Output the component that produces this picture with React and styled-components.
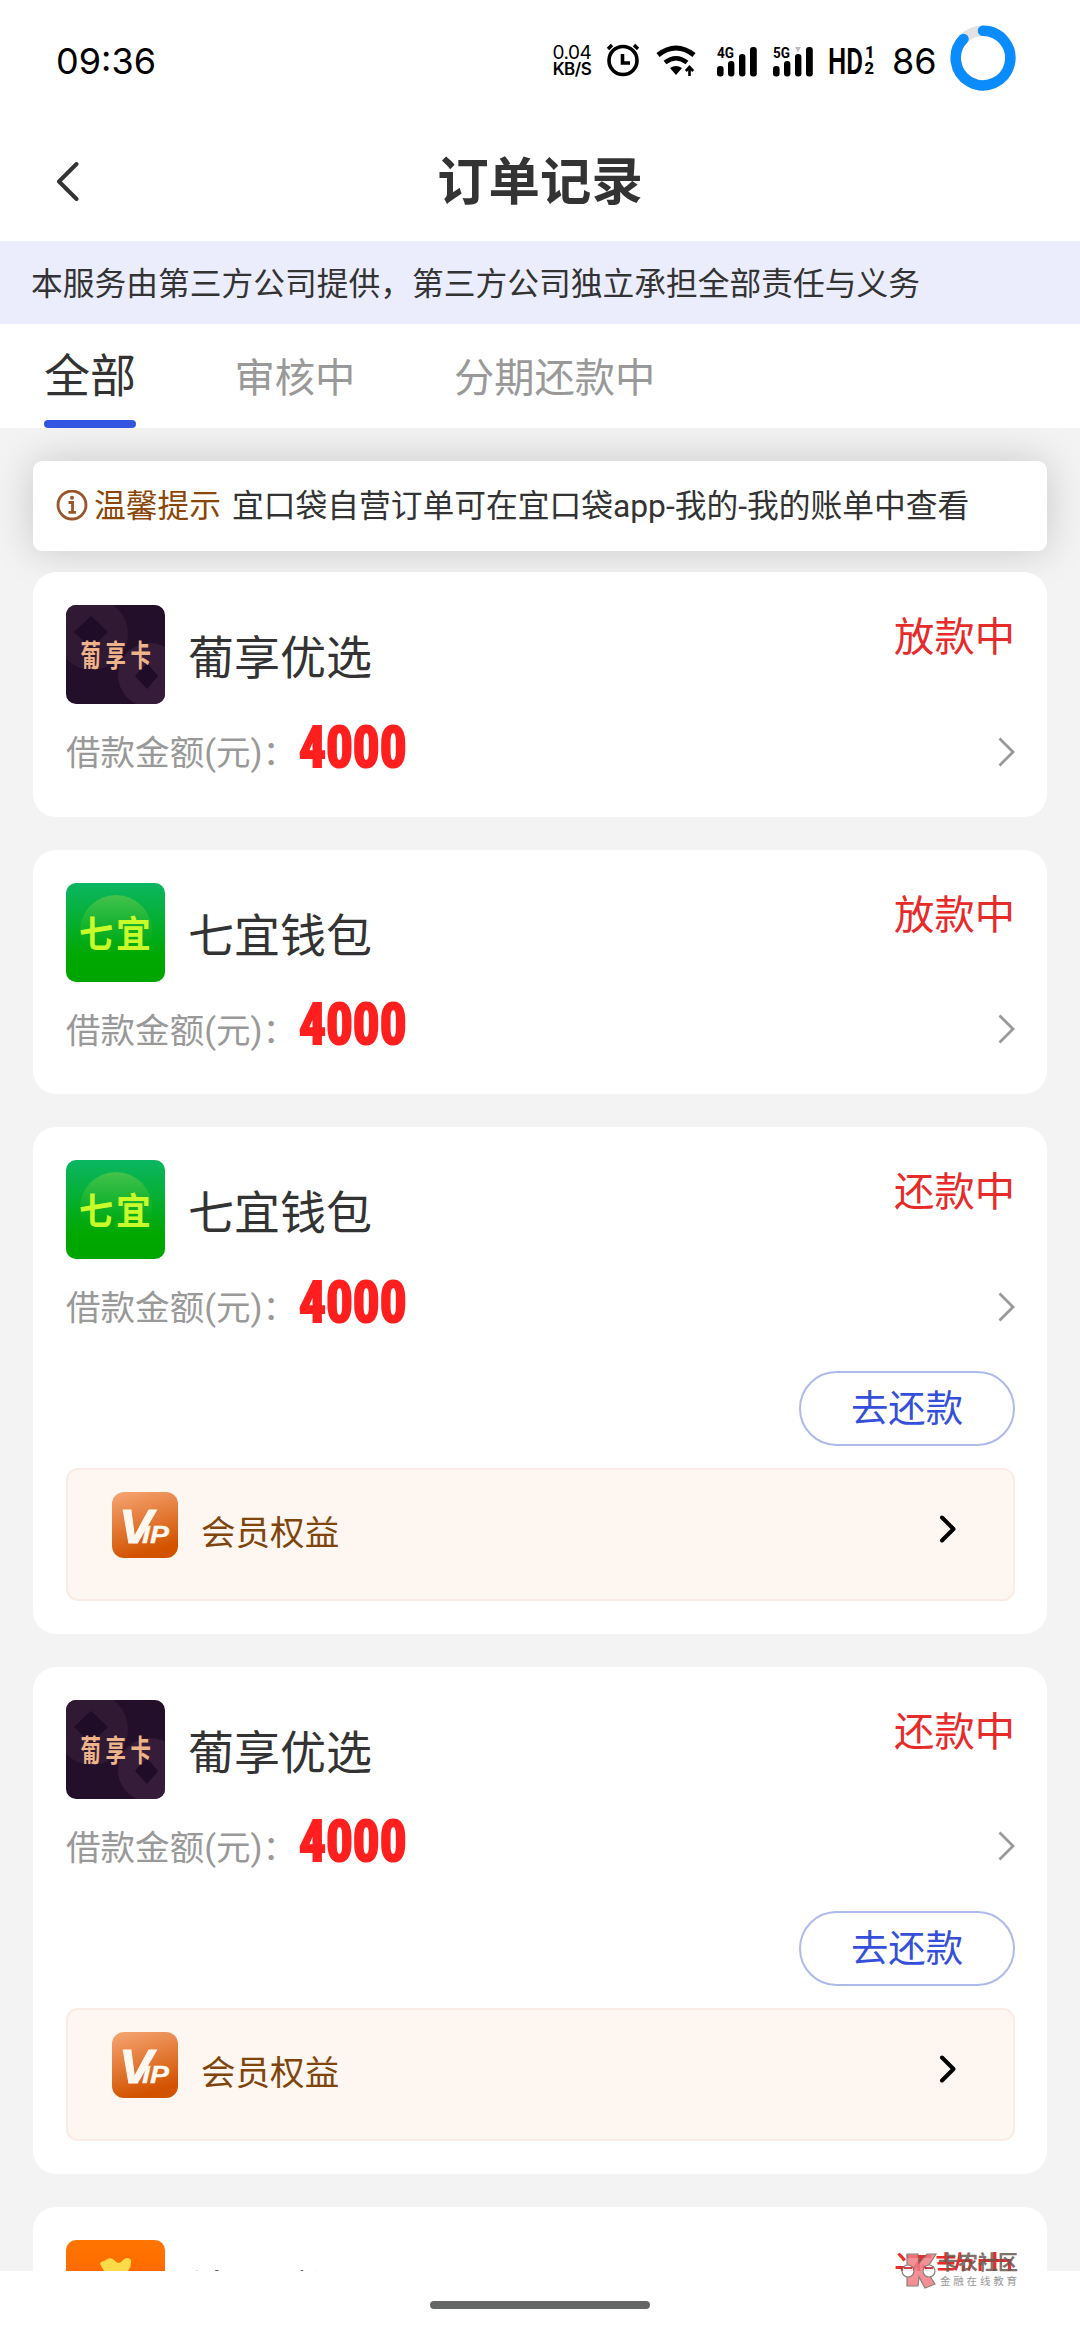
import React from "react";
import styled, { createGlobalStyle } from "styled-components";

const GlobalStyle = createGlobalStyle`
  * {
    box-sizing: border-box;
  }
  body {
    margin: 0;
    background: #fff;
    font-family: Roboto, "Noto Sans CJK SC", sans-serif;
    color: #333;
  }
  svg {
    display: block;
    flex: none;
  }
`;

const Screen = styled.div`
  position: relative;
  width: 1080px;
  height: 2340px;
  overflow: hidden;
  display: flex;
  flex-direction: column;
  background: #fff;
`;

const StatusBar = styled.div`
  height: 121px;
  flex: none;
  padding: 0 64px 0 56px;
  display: flex;
  justify-content: space-between;
  align-items: center;
  font-family: Inter, sans-serif;
  font-size: 36px;
  color: #000;
`;

const StatusIcons = styled.div`
  display: flex;
  align-items: center;
  .alarm {
    margin: -3px 16px 0 0;
  }
  .wifi {
    margin-right: 21px;
  }
  .signal {
    margin-right: 15px;
  }
  .hd {
    margin-right: 17px;
  }
  .ring {
    margin-top: -6px;
  }
`;

const NetSpeed = styled.div`
  width: 42px;
  margin-right: 13px;
  font-size: 19px;
  line-height: 16px;
  letter-spacing: -0.5px;
  text-align: center;
  b {
    display: block;
    font-size: 17px;
    font-weight: 600;
  }
`;

const Battery = styled.span`
  width: 42px;
  margin-right: 16px;
  white-space: nowrap;
`;

const Header = styled.div`
  height: 120px;
  flex: none;
  padding: 0 56px;
  display: grid;
  grid-template-columns: 24px 1fr 24px;
  align-items: center;
`;

const Title = styled.h1`
  margin: 0;
  padding-top: 3px;
  text-align: center;
  font-size: 51.4px;
  line-height: 72px;
  font-weight: 700;
`;

const Notice = styled.div`
  height: 83px;
  flex: none;
  padding-left: 31px;
  background: #ebedfd;
  font-size: 31.75px;
  line-height: 87px;
  white-space: nowrap;
`;

const Tabs = styled.div`
  height: 104px;
  flex: none;
  padding-left: 44px;
  display: flex;
  gap: 98.5px;
  position: relative;
  z-index: 1;
  background: #fff;
`;

const Tab = styled.div`
  height: 104px;
  line-height: ${props => (props.$active ? "105px" : "110px")};
  font-size: ${props => (props.$active ? "46px" : "40.3px")};
  color: ${props => (props.$active ? "#333" : "#999")};
  display: flex;
  flex-direction: column;
  &::after {
    content: "";
    display: ${props => (props.$active ? "block" : "none")};
    height: 8px;
    margin-top: -9px;
    border-radius: 4px;
    background: #3455df;
  }
`;

const Content = styled.div`
  height: 1843px;
  flex: none;
  overflow: hidden;
  padding: 33px 33px 0;
  background: #f3f3f3;
`;

const Tip = styled.div`
  height: 90px;
  padding-left: 23px;
  margin-bottom: 21px;
  display: flex;
  align-items: center;
  border-radius: 9px;
  background: #fff;
  box-shadow: 0 0 42px rgba(0, 0, 0, 0.18);
  font-size: 31.75px;
  white-space: nowrap;
  svg {
    margin-right: 6px;
  }
  span {
    margin-top: -7px;
  }
`;

const TipLabel = styled.span`
  color: #8a4708;
  margin-right: 11px;
`;

const Card = styled.div`
  height: ${props => (props.$repay ? "506.7px" : "244.6px")};
  margin-bottom: 33px;
  padding: 33px 32px 0 33px;
  border-radius: 23px;
  background: #fff;
`;

const CardTop = styled.div`
  display: flex;
  height: 99px;
`;

const Name = styled.div`
  flex: 1;
  margin-left: 23px;
  font-size: 46px;
  line-height: 106px;
`;

const Status = styled.div`
  font-size: 40.3px;
  line-height: 66px;
  color: #e72a2a;
`;

const AmountRow = styled.div`
  height: 98px;
  padding-bottom: 3px;
  display: flex;
  align-items: center;
`;

const AmountLabel = styled.span`
  font-size: 34.56px;
  line-height: 40px;
  margin-top: 3px;
  color: #999;
  width: 233px;
  white-space: nowrap;
`;

const Amount = styled.span`
  flex: 1;
  font-family: "Liberation Sans Narrow", "Roboto Condensed", Roboto, sans-serif;
  font-size: 57px;
  font-weight: 700;
  line-height: 60px;
  margin-top: -8px;
  color: #ff1f1f;
  -webkit-text-stroke: 2.2px #ff1f1f;
  transform: scaleX(0.935);
  transform-origin: 0 50%;
`;

const ActionRow = styled.div`
  display: flex;
  justify-content: flex-end;
  margin: 14px 0 22px;
`;

const RepayButton = styled.button`
  width: 216px;
  height: 75px;
  padding: 0;
  border: 2px solid #aeb9ec;
  border-radius: 38px;
  background: #fff;
  color: #3450d8;
  font-family: inherit;
  font-size: 37.4px;
  line-height: 72px;
`;

const VipBox = styled.div`
  height: 133px;
  padding: 22px 57px 0 44px;
  display: flex;
  align-items: flex-start;
  justify-content: space-between;
  border: 2px solid #faebe4;
  border-radius: 12px;
  background: #fef7f1;
  > svg {
    margin-top: 23px;
  }
`;

const VipLabel = styled.div`
  display: flex;
  align-items: center;
  gap: 23px;
  font-size: 34.56px;
  color: #80450c;
  span {
    padding-top: 10px;
  }
`;

const HomeBar = styled.div`
  flex: 1;
  padding-top: 30px;
  background: #fff;
  &::after {
    content: "";
    display: block;
    width: 220px;
    height: 8px;
    margin: 0 auto;
    border-radius: 4px;
    background: #656766;
  }
`;

const Watermark = styled.div`
  position: absolute;
  left: 901px;
  top: 2250px;
  z-index: 2;
  display: flex;
  opacity: 0.85;
`;

const WatermarkText = styled.div`
  margin-left: 1px;
  font-size: 20px;
  line-height: 26px;
  font-weight: 700;
  color: #6a5a50;
  white-space: nowrap;
  small {
    display: block;
    padding-left: 2px;
    font-size: 10.5px;
    line-height: 12px;
    font-weight: 400;
    letter-spacing: 2.8px;
    color: #888;
  }
`;

const CJK = "Noto Sans CJK SC, sans-serif";

const AlarmIcon = () => (
  <svg className="alarm" width="34" height="36" viewBox="0 0 34 36" fill="none" stroke="#000">
    <circle cx="17" cy="19.5" r="14" strokeWidth="3.6" />
    <path d="M16.5 13v9h7.5" strokeWidth="3.6" />
    <path d="M2 8l4-4M32 8l-4-4" strokeWidth="3.4" />
  </svg>
);

const WifiIcon = () => (
  <svg className="wifi" width="40" height="34" viewBox="0 0 40 34" fill="none" stroke="#000">
    <path d="M2 11Q20 -3 38 11" strokeWidth="5" />
    <path d="M9 18.5Q20 10 31 18.5" strokeWidth="4.6" />
    <path d="M14 24Q20 20 26 24L20 31Z" fill="#000" stroke="none" />
    <path d="M33.5 32v-8M29.8 27l3.7-4 3.7 4" strokeWidth="2.6" />
  </svg>
);

const SignalIcon = ({ label, dot }) => (
  <svg className="signal" width="41" height="32" viewBox="0 0 41 32">
    <text x="0" y="12.5" fontFamily="Roboto" fontWeight="700" fontSize="15.5" textLength="17" lengthAdjust="spacingAndGlyphs">{label}</text>
    <rect x="0" y="21" width="6.6" height="10.5" rx="3" />
    <rect x="11" y="16" width="6.4" height="15.5" rx="3" />
    <rect x="22" y="9" width="6.4" height="22.5" rx="3" />
    <rect x="33" y="2" width="6.8" height="29.5" rx="3" />
    {dot && <path d="M22 2h6l-3 5z" fill="#bbb" />}
  </svg>
);

const HdIcon = () => (
  <svg className="hd" width="46" height="32" viewBox="0 0 46 32">
    <text x="-1" y="28.5" fontFamily="Roboto" fontWeight="600" fontSize="36" textLength="35" lengthAdjust="spacingAndGlyphs">HD</text>
    <text x="36" y="13" fontFamily="Roboto" fontWeight="800" fontSize="16.5">1</text>
    <text x="35.5" y="28.5" fontFamily="Roboto" fontWeight="800" fontSize="16.5">2</text>
  </svg>
);

const BatteryRing = () => (
  <svg className="ring" width="66" height="66" viewBox="0 0 66 66" fill="none" strokeWidth="10.5">
    <circle cx="33" cy="33" r="27.3" stroke="#e2e2e4" />
    <path d="M33 5.7A27.3 27.3 0 1 1 13.5 13.9" stroke="#0a8cff" strokeLinecap="round" />
  </svg>
);

const BackIcon = () => (
  <svg width="24" height="40" viewBox="0 0 24 40" fill="none" stroke="#333" strokeWidth="4" strokeLinecap="round" strokeLinejoin="round">
    <path d="M20.5 3L3 20.5L20.5 38" />
  </svg>
);

const InfoIcon = () => (
  <svg width="32" height="32" viewBox="0 0 32 32" fill="none" stroke="#9a5528">
    <circle cx="16" cy="15" r="14" strokeWidth="2.8" />
    <path d="M12.5 12.5h4v9.5M12.5 22.3h7.5" strokeWidth="2.8" />
    <circle cx="16" cy="7.8" r="2" fill="#9a5528" stroke="none" />
  </svg>
);

const Arrow = () => (
  <svg width="18" height="32" viewBox="0 0 18 32" fill="none" stroke="#999" strokeWidth="2.8">
    <path d="M2.5 2.5L16 16L2.5 29.5" />
  </svg>
);

const VipArrow = () => (
  <svg width="18" height="28" viewBox="0 0 18 28" fill="none" stroke="#000" strokeWidth="4" strokeLinecap="round" strokeLinejoin="round">
    <path d="M4 2.5L15.5 14L4 25.5" />
  </svg>
);

const VipIcon = () => (
  <svg width="66" height="66" viewBox="0 0 66 66">
    <defs>
      <linearGradient id="vip" x1="0" y1="0" x2="0.3" y2="1">
        <stop offset="0" stopColor="#f6a674" />
        <stop offset="1" stopColor="#d25200" />
      </linearGradient>
    </defs>
    <rect width="66" height="66" rx="12" fill="url(#vip)" />
    <g fill="#fff8f0" stroke="#fff8f0" fontFamily="Liberation Sans" fontWeight="700" fontStyle="italic">
      <text x="7" y="51" fontSize="49" strokeWidth="1" textLength="34" lengthAdjust="spacingAndGlyphs">V</text>
      <text x="30" y="51" fontSize="24" strokeWidth="0.3" textLength="27" lengthAdjust="spacingAndGlyphs">IP</text>
    </g>
  </svg>
);

const PuxiangLogo = () => (
  <svg width="99" height="99" viewBox="0 0 99 99">
    <defs>
      <clipPath id="round">
        <rect width="99" height="99" rx="10" />
      </clipPath>
    </defs>
    <g clipPath="url(#round)">
      <rect width="99" height="99" fill="#230f29" />
      <circle cx="26" cy="29" r="36" fill="#2f1933" />
      <path d="M25 11L42 27L25 43L8 27Z" fill="#1f0c27" />
      <circle cx="84" cy="70" r="32" fill="#351c38" />
      <path d="M81 58L92 71L81 84L69 71Z" fill="#1f0c27" />
    </g>
    <g fill="#edb48c" fontFamily={CJK} fontWeight="700" fontSize="30">
      <text transform="translate(14.5 60.5) scale(.68 1)">葡</text>
      <text transform="translate(39.5 60.5) scale(.68 1)">享</text>
      <text transform="translate(64.5 60.5) scale(.68 1)">卡</text>
    </g>
  </svg>
);

const QiyiLogo = () => (
  <svg width="99" height="99" viewBox="0 0 99 99">
    <defs>
      <linearGradient id="green" x1="0" y1="0" x2="0" y2="1">
        <stop offset="0" stopColor="#0bb663" />
        <stop offset="0.75" stopColor="#00a800" />
        <stop offset="1" stopColor="#00a500" />
      </linearGradient>
      <linearGradient id="glow" x1="0" y1="0" x2="0" y2="1">
        <stop offset="0" stopColor="#6ccb45" stopOpacity="0.6" />
        <stop offset="0.7" stopColor="#3cbf30" stopOpacity="0" />
      </linearGradient>
    </defs>
    <rect width="99" height="99" rx="10" fill="url(#green)" />
    <circle cx="50" cy="48" r="36" fill="url(#glow)" />
    <g fill="#c9fb2b" fontFamily={CJK} fontWeight="700" fontSize="37">
      <text transform="translate(13 64.5) scale(.92 1)">七</text>
      <text transform="translate(50 64.5) scale(.94 1)">宜</text>
    </g>
  </svg>
);

const OrangeLogo = () => (
  <svg width="99" height="99" viewBox="0 0 99 99">
    <defs>
      <linearGradient id="orange" x1="0" y1="0" x2="0" y2="1">
        <stop offset="0" stopColor="#ff7600" />
        <stop offset="1" stopColor="#ff5000" />
      </linearGradient>
    </defs>
    <rect width="99" height="99" rx="10" fill="url(#orange)" />
    <path d="M34 24Q34 22 38 21Q44 16 48 20Q53 26 57 20Q62 16 65 20Q66 26 62 31Q84 50 84 66Q84 84 50 84Q16 84 16 66Q16 50 38 31Z" fill="#ffdb4a" />
  </svg>
);

const Mascot = () => (
  <svg width="36" height="40" viewBox="0 0 36 40" stroke="#7a6a62" strokeWidth="1.2">
    <path d="M6 4h11l1 9 8-9h9L25 20l9 14-10 4-6-11-1 9H6z" fill="#f07c86" />
    <ellipse cx="7" cy="21" rx="6" ry="6" fill="#fff" />
    <ellipse cx="28" cy="21" rx="6" ry="6" fill="#fff" />
    <path d="M3 18h8M24 18h8" stroke="#c22" strokeWidth="2" />
  </svg>
);

const logos = { puxiang: PuxiangLogo, qiyi: QiyiLogo, orange: OrangeLogo };

const orders = [
  { name: "葡享优选", logo: "puxiang", status: "放款中", amount: 4000 },
  { name: "七宜钱包", logo: "qiyi", status: "放款中", amount: 4000 },
  { name: "七宜钱包", logo: "qiyi", status: "还款中", amount: 4000, repay: true },
  { name: "葡享优选", logo: "puxiang", status: "还款中", amount: 4000, repay: true },
  { name: "钱豆学", logo: "orange", status: "还款中", amount: 4000, repay: true },
];

const OrderCard = ({ name, logo, status, amount, repay }) => {
  const Logo = logos[logo];
  return (
    <Card $repay={repay}>
      <CardTop>
        <Logo />
        <Name>{name}</Name>
        <Status>{status}</Status>
      </CardTop>
      <AmountRow>
        <AmountLabel>借款金额(元)：</AmountLabel>
        <Amount>{amount}</Amount>
        <Arrow />
      </AmountRow>
      {repay && (
        <>
          <ActionRow>
            <RepayButton>去还款</RepayButton>
          </ActionRow>
          <VipBox>
            <VipLabel>
              <VipIcon />
              <span>会员权益</span>
            </VipLabel>
            <VipArrow />
          </VipBox>
        </>
      )}
    </Card>
  );
};

const App = () => {
  return (
    <Screen>
      <GlobalStyle />
      <StatusBar>
        <span>09:36</span>
        <StatusIcons>
          <NetSpeed>
            0.04
            <b>KB/S</b>
          </NetSpeed>
          <AlarmIcon />
          <WifiIcon />
          <SignalIcon label="4G" />
          <SignalIcon label="5G" dot />
          <HdIcon />
          <Battery>86</Battery>
          <BatteryRing />
        </StatusIcons>
      </StatusBar>
      <Header>
        <BackIcon />
        <Title>订单记录</Title>
      </Header>
      <Notice>本服务由第三方公司提供，第三方公司独立承担全部责任与义务</Notice>
      <Tabs>
        <Tab $active>全部</Tab>
        <Tab>审核中</Tab>
        <Tab>分期还款中</Tab>
      </Tabs>
      <Content>
        <Tip>
          <InfoIcon />
          <TipLabel>温馨提示</TipLabel>
          <span>宜口袋自营订单可在宜口袋app-我的-我的账单中查看</span>
        </Tip>
        {orders.map((order, i) => (
          <OrderCard key={i} {...order} />
        ))}
      </Content>
      <HomeBar />
      <Watermark>
        <Mascot />
        <WatermarkText>
          卡农社区
          <small>金融在线教育</small>
        </WatermarkText>
      </Watermark>
    </Screen>
  );
};

export default App;
